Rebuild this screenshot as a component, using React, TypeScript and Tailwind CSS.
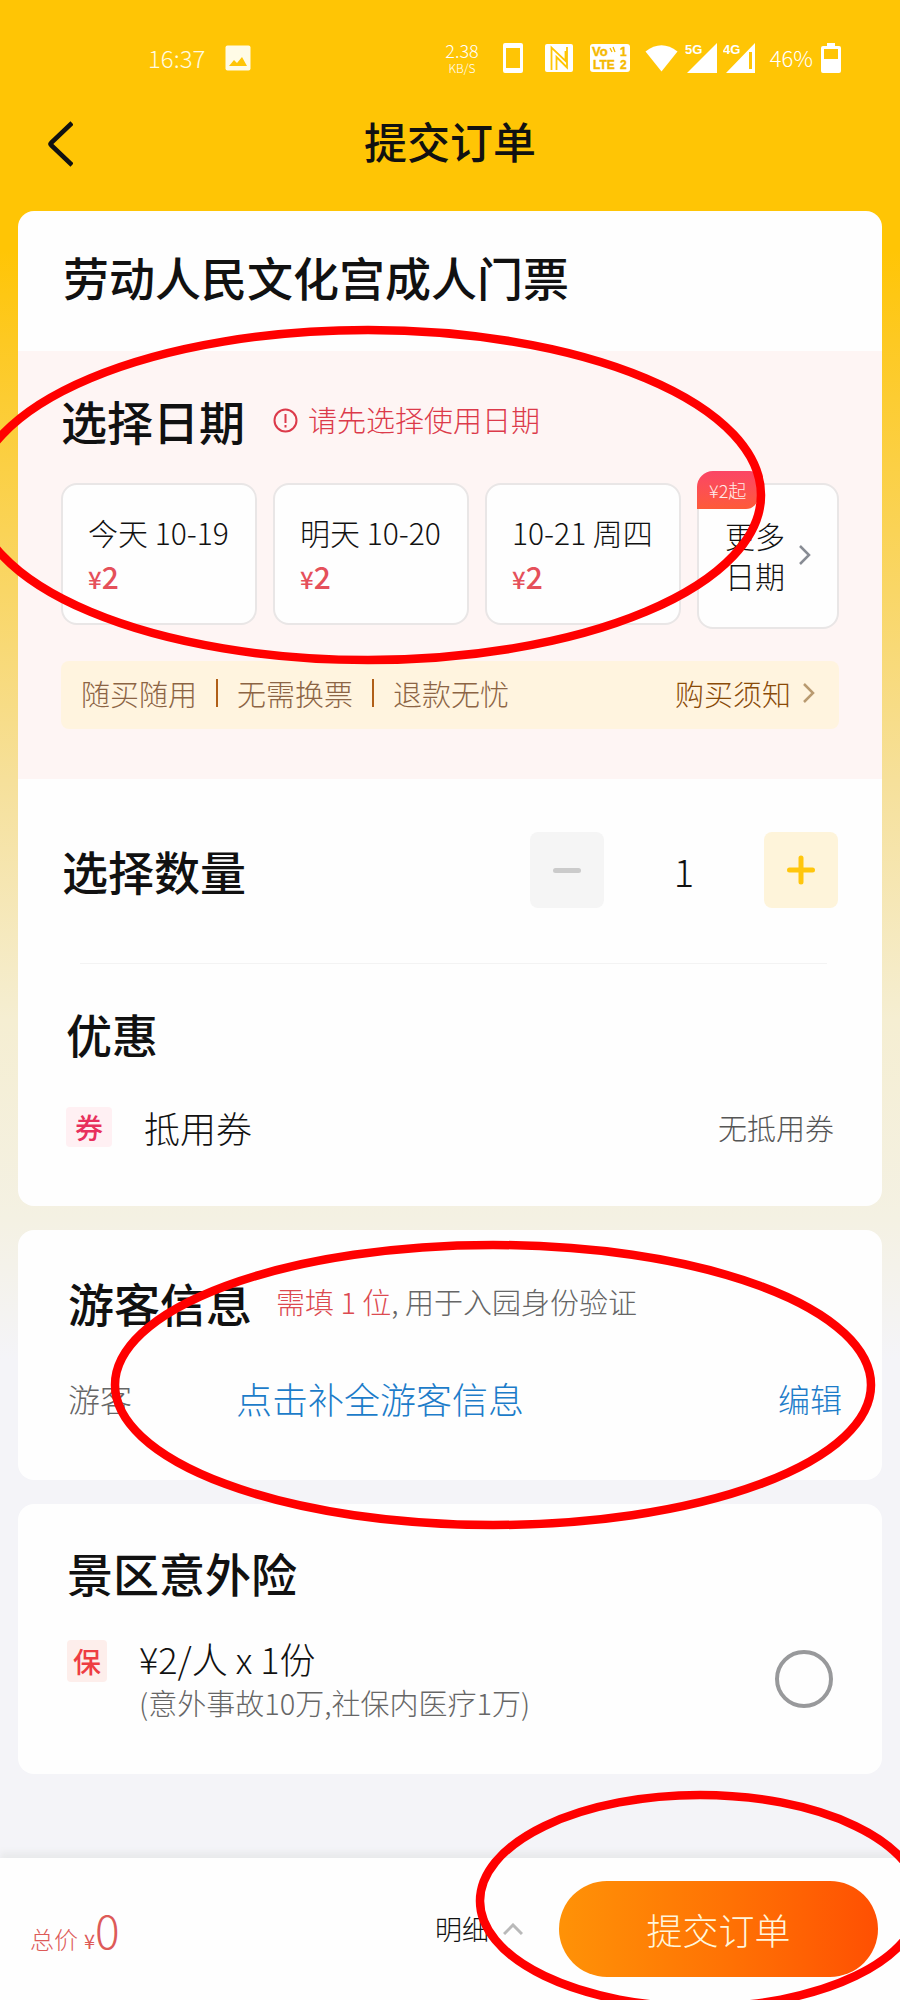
import { useState } from "react";
import type { ReactNode } from "react";
import { clsx } from "clsx";

interface DateOption {
  id: string;
  label: string;
  price: number;
}

const dateOptions: DateOption[] = [
  { id: "10-19", label: "今天 10-19", price: 2 },
  { id: "10-20", label: "明天 10-20", price: 2 },
  { id: "10-21", label: "10-21 周四", price: 2 },
];

const promises = ["随买随用", "无需换票", "退款无忧"];

function StatusBar() {
  return (
    <div className="flex h-11 items-center justify-between pl-[148px] pr-[59px] text-2xl font-light text-[#fffbe0]">
      <div className="flex items-center gap-5">
        <span>16:37</span>
        <svg width="26" height="26" viewBox="0 0 26 26">
          <rect x="0.5" y="0.5" width="25" height="25" rx="2" fill="#fffbe6" />
          <path d="M4 21l5-6 3 3 5-6 5 9z" fill="#ffc505" />
        </svg>
      </div>
      <div className="flex items-center text-white">
        <div className="mr-6 flex flex-col items-center">
          <span className="text-lg leading-5">2.38</span>
          <span className="text-xs leading-4">KB/S</span>
        </div>
        <svg className="mr-[22px]" width="20" height="30" viewBox="0 0 20 30">
          <path fillRule="evenodd" d="M2 0h16a2 2 0 012 2v26a2 2 0 01-2 2H2a2 2 0 01-2-2V2a2 2 0 012-2zm1 5v20h14V5z" fill="currentColor" />
        </svg>
        {/* nfc */}
        <svg className="mr-[17px]" width="28" height="28" viewBox="0 0 28 28">
          <rect width="28" height="28" rx="2" fill="currentColor" />
          <path d="M6.500 26V3.500L20.500 17V7M11.500 26V13L22 23.500V3" fill="none" stroke="#ffc505" strokeWidth="1.8" />
        </svg>
        <svg className="mr-[15px]" width="40" height="28" viewBox="0 0 40 28">
          <rect width="40" height="28" rx="3" fill="currentColor" />
          <g fill="#f5b900" stroke="#f5b900" strokeWidth="0.4" fontFamily="Liberation Sans, sans-serif" fontWeight="700">
            <text x="2" y="12" fontSize="13">Vo</text>
            <text x="3" y="25" fontSize="12">LTE</text>
            <text x="30" y="12" fontSize="12">1</text>
            <text x="30" y="25" fontSize="12">2</text>
          </g>
          <path d="M20 4l2 4M23 3l2 5" stroke="#f5b900" strokeWidth="1.3" />
        </svg>
        <svg className="mr-[7px]" width="33" height="28" viewBox="0 0 33 28">
          <path d="M16.500 27.500L0.500 7.500Q16.500 -5 32.500 7.500z" fill="currentColor" />
        </svg>
        <svg className="mr-[6px]" width="32" height="30" viewBox="0 0 32 30">
          <path d="M2 30L32 0v30z" fill="currentColor" />
          <text x="0" y="11" fontSize="13" fontWeight="700" fontFamily="Liberation Sans, sans-serif" fill="currentColor">5G</text>
        </svg>
        <svg className="mr-[15px]" width="32" height="30" viewBox="0 0 32 30">
          <path fillRule="evenodd" d="M3 30L32 0v30zM26 9v17h3V9z" fill="currentColor" />
          <text x="0" y="11" fontSize="13" fontWeight="700" fontFamily="Liberation Sans, sans-serif" fill="currentColor">4G</text>
        </svg>
        <span className="mr-2 text-[22px]">46%</span>
        <svg width="20" height="30" viewBox="0 0 20 30">
          <path fillRule="evenodd" d="M6 0h8v3h4a2 2 0 012 2v23a2 2 0 01-2 2H2a2 2 0 01-2-2V5a2 2 0 012-2h4zM3 6v10h14V6z" fill="currentColor" />
        </svg>
      </div>
    </div>
  );
}

function Chevron({ className }: { className?: string }) {
  return (
    <svg className={className} width="12" height="22" viewBox="0 0 12 22" fill="none" stroke="currentColor" strokeWidth="2.5">
      <path d="M1 2l9 9-9 9" />
    </svg>
  );
}

function Card({ children, className }: { children: ReactNode; className?: string }) {
  return <section className={clsx("overflow-hidden rounded-2xl bg-[#fefefe]", className)}>{children}</section>;
}

function Heading({ children }: { children: ReactNode }) {
  return <h2 className="text-[46px] font-medium leading-[64px]">{children}</h2>;
}

function Markers() {
  return (
    <svg
      className="pointer-events-none absolute inset-0 h-full w-full"
      viewBox="0 0 900 2000"
      preserveAspectRatio="none"
      fill="none"
      stroke="#ff0000"
      strokeWidth="8.5"
      aria-hidden="true"
    >
      <ellipse cx="368" cy="495" rx="393" ry="165" />
      <ellipse cx="493" cy="1385" rx="378" ry="140" />
      <ellipse cx="700" cy="1901" rx="220" ry="106" />
    </svg>
  );
}

export default function App() {
  const [date, setDate] = useState("");
  const [count, setCount] = useState(1);
  const [insured, setInsured] = useState(false);

  const selected = dateOptions.find((d) => d.id === date);
  const total = selected ? selected.price * count + (insured ? 2 * count : 0) : 0;

  return (
    <div className="relative flex min-h-screen flex-col overflow-hidden bg-[linear-gradient(#ffc505_0px,#ffc505_250px,#fdc922_340px,#f6e09a_780px,#f5eed2_1020px,#f4f1e3_1220px,#f4f4f8_1360px)] pt-9 font-['Noto_Sans_CJK_SC',sans-serif] text-[#111]">
      <StatusBar />

      <header className="mt-[34px] mb-[37px] grid h-15 grid-cols-[1fr_auto_1fr] items-center px-12">
        <button type="button" aria-label="返回" className="justify-self-start">
          <svg width="25" height="46" viewBox="0 0 25 46" fill="none" stroke="currentColor" strokeWidth="4.500" strokeLinejoin="round">
            <path d="M24 2L3 22q-1 1 0 2L24 44" />
          </svg>
        </button>
        <h1 className="pb-2 text-[43px] font-medium leading-[52px]">提交订单</h1>
      </header>

      <main className="flex flex-col gap-6 px-[18px]">
        <Card>
          <div className="px-[45px] pt-[33px] pb-[43px]">
            <Heading>劳动人民文化宫成人门票</Heading>
          </div>

          <div className="bg-[#fef5f4] px-[43px] pt-[37px] pb-[50px]">
            <div className="flex items-center gap-7">
              <Heading>选择日期</Heading>
              <p className="flex items-center gap-2.5 text-[29px] font-light text-[#dc3a4a]">
                <svg width="25" height="25" viewBox="0 0 25 25" fill="none" stroke="currentColor" strokeWidth="2">
                  <circle cx="12.500" cy="12.500" r="11" />
                  <path d="M12.500 6v9M12.500 17v2.500" />
                </svg>
                请先选择使用日期
              </p>
            </div>

            <div className="mt-[31px] grid grid-cols-[196fr_196fr_196fr_142fr] items-start gap-4">
              {dateOptions.map((option) => (
                <button
                  key={option.id}
                  type="button"
                  onClick={() => setDate(option.id)}
                  className={clsx(
                    "rounded-2xl border-2 bg-[#fefefe] p-[25px] text-left leading-[44px]",
                    date === option.id ? "border-[#ffc505]" : "border-[#e9e6e6]",
                  )}
                >
                  <span className="block whitespace-nowrap text-[30px] font-light">{option.label}</span>
                  <span className="block text-[30px] font-medium text-[#e5505a]">
                    <span className="text-2xl">¥</span>
                    {option.price}
                  </span>
                </button>
              ))}
              <button
                type="button"
                className="relative flex items-center justify-between rounded-2xl border-2 border-[#e9e6e6] bg-[#fefefe] px-[26px] pt-[30px] pb-8 text-[30px] font-light leading-10"
              >
                <span>
                  更多
                  <br />
                  日期
                </span>
                <Chevron className="text-[#888c94]" />
                <span className="absolute -top-3.5 -left-0.5 rounded-tl-2xl rounded-tr-lg rounded-br-xl bg-linear-to-b from-[#fb4565] to-[#fe5a37] px-3 text-lg leading-[38px] text-[#ffeceb]">
                  ¥2起
                </span>
              </button>
            </div>

            <div className="mt-8 flex items-center justify-between rounded-lg bg-[#fff4df] pt-2.5 pr-6 pb-3.5 pl-5 text-[29px] font-light leading-[44px] text-[#8c6444]">
              <ul className="flex items-center">
                {promises.map((text, i) => (
                  <li key={text} className="flex items-center">
                    {i > 0 && <span className="mx-[19px] h-7 w-0.5 bg-[#b05f18]" />}
                    {text}
                  </li>
                ))}
              </ul>
              <a href="#notice" className="flex items-center gap-3 text-[#8a4b08]">
                购买须知
                <Chevron className="text-[#b99a70]" />
              </a>
            </div>
          </div>

          <div className="flex items-center justify-between px-[44px] pt-[53px] pb-[55px]">
            <Heading>选择数量</Heading>
            <div className="flex items-center text-[38px]">
              <button
                type="button"
                aria-label="减少"
                onClick={() => setCount(Math.max(1, count - 1))}
                className="flex h-[76px] w-[74px] items-center justify-center rounded-lg bg-[#f5f5f5]"
              >
                <span className="h-[5px] w-7 rounded-sm bg-[#cbcbcb]" />
              </button>
              <output className="w-40 text-center font-light">{count}</output>
              <button
                type="button"
                aria-label="增加"
                onClick={() => setCount(count + 1)}
                className="flex h-[76px] w-[74px] items-center justify-center rounded-lg bg-[#fef4da]"
              >
                <svg width="28" height="30" viewBox="0 0 28 30" stroke="#ffc60d" strokeWidth="5" strokeLinecap="round">
                  <path d="M2.500 15h23M14 3v24" />
                </svg>
              </button>
            </div>
          </div>

          <hr className="mr-[55px] ml-[62px] border-[#f3f3f3]" />

          <div className="px-12 pt-[37px] pb-[55px]">
            <Heading>优惠</Heading>
            <div className="mt-[38px] flex items-center leading-[48px]">
              <span className="w-[46px] rounded bg-[#fff0f3] text-center text-[28px] font-medium leading-10 text-[#e8305c]">券</span>
              <span className="ml-8 text-4xl font-light">抵用券</span>
              <span className="ml-auto text-[29px] font-light text-[#555]">无抵用券</span>
            </div>
          </div>
        </Card>

        <Card className="px-[50px] pt-10 pb-[58px]">
          <div className="flex items-center gap-6">
            <Heading>游客信息</Heading>
            <p className="text-[29px] font-light text-[#666]">
              <span className="text-[#dc4a50]">需填 1 位</span>, 用于入园身份验证
            </p>
          </div>
          <div className="mt-10 flex items-center font-light leading-[48px]">
            <span className="w-[168px] text-[32px] text-[#666]">游客</span>
            <a href="#visitor" className="text-4xl text-[#1c7cc9]">点击补全游客信息</a>
            <button type="button" className="ml-auto -mr-2.5 text-[32px] text-[#1c7cc9]">编辑</button>
          </div>
        </Card>

        <Card className="px-[49px] pt-9 pb-[50px]">
          <Heading>景区意外险</Heading>
          <label htmlFor="insurance" className="mt-8 flex items-start leading-[44px]">
            <span className="mt-1 w-10 rounded-sm bg-[#fdeeeb] text-center text-[28px] font-medium leading-[42px] text-[#ee3d42]">保</span>
            <span className="ml-8 font-light">
              <span className="block text-4xl leading-[44px]">¥2/人 x 1份</span>
              <span className="block text-[29px] text-[#666]">(意外事故10万,社保内医疗1万)</span>
            </span>
            <input
              id="insurance"
              type="checkbox"
              checked={insured}
              onChange={(e) => setInsured(e.target.checked)}
              className="mt-3.5 ml-auto size-[58px] appearance-none rounded-full border-4 border-[#98999b] checked:border-[#ffc505]"
            />
          </label>
        </Card>
      </main>

      <footer className="mt-auto flex items-center bg-[#fefefe] py-[23px] pr-[22px] pl-[30px] shadow-[0_-6px_6px_#e9eaec]">
        <p className="flex items-baseline font-light text-[#dd5a58]">
          <span className="mr-1.5 text-2xl">总价</span>
          <span className="text-xl font-normal">¥</span>
          <span className="text-[46px]">{total}</span>
        </p>
        <button type="button" className="mr-9 ml-auto flex items-center gap-3.5 text-[27px] font-light">
          明细
          <svg width="20" height="12" viewBox="0 0 20 12" fill="none" stroke="#b9b9b9" strokeWidth="3">
            <path d="M1 11l9-9 9 9" />
          </svg>
        </button>
        <button
          type="button"
          className="h-24 w-[319px] rounded-full bg-linear-to-r from-[#ff9207] to-[#ff4f02] text-4xl font-light text-[#fff6dc]"
        >
          提交订单
        </button>
      </footer>

      <Markers />
    </div>
  );
}
